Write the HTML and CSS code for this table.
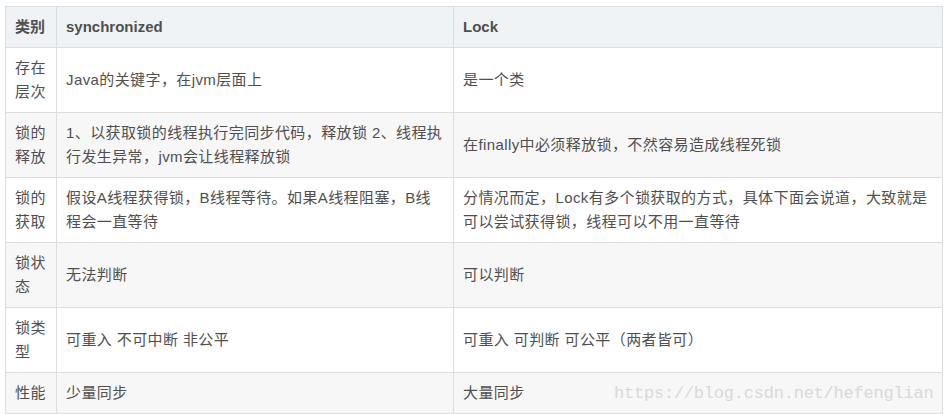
FILE: index.html
```html
<!DOCTYPE html>
<html lang="zh-CN">
<head>
<meta charset="utf-8">
<title>synchronized vs Lock</title>
<link rel="stylesheet" href="styles.css">
</head>
<body>
<div class="wrap">
  <table class="cmp">
    <colgroup>
      <col class="c1">
      <col class="c2">
      <col class="c3">
    </colgroup>
    <thead>
      <tr><th>类别</th><th>synchronized</th><th>Lock</th></tr>
    </thead>
    <tbody>
      <tr><td>存在层次</td><td>Java的关键字，在jvm层面上</td><td>是一个类</td></tr>
      <tr><td>锁的释放</td><td>1、以获取锁的线程执行完同步代码，释放锁 2、线程执行发生异常，jvm会让线程释放锁</td><td>在finally中必须释放锁，不然容易造成线程死锁</td></tr>
      <tr><td>锁的获取</td><td>假设A线程获得锁，B线程等待。如果A线程阻塞，B线程会一直等待</td><td>分情况而定，Lock有多个锁获取的方式，具体下面会说道，大致就是可以尝试获得锁，线程可以不用一直等待</td></tr>
      <tr><td>锁状态</td><td>无法判断</td><td>可以判断</td></tr>
      <tr><td>锁类型</td><td>可重入 不可中断 非公平</td><td>可重入 可判断 可公平（两者皆可）</td></tr>
      <tr><td>性能</td><td>少量同步</td><td>大量同步</td></tr>
    </tbody>
  </table>
  <div class="watermark">https://blog.csdn.net/hefenglian</div>
</div>
</body>
</html>
```
FILE: styles.css
```css
html, body {
  margin: 0;
  padding: 0;
  background: #ffffff;
}
body {
  font-family: "Liberation Sans", "Noto Sans CJK SC", sans-serif;
  font-size: 15px;
  color: #4f4f4f;
}
.wrap {
  position: relative;
  padding: 6px 0 0 5px;
  width: 937px;
}
.cmp {
  border-collapse: collapse;
  table-layout: fixed;
  width: 937px;
}
.c1 { width: 51px; }
.c2 { width: 397px; }
.c3 { width: 489px; }
.cmp th,
.cmp td {
  border: 1px solid #dddddd;
  padding: 8px 10px 8px 9px;
  line-height: 24px;
  text-align: left;
  vertical-align: middle;
  word-break: break-all;
}
.cmp td {
  letter-spacing: 0.4px;
}
.cmp th:first-child,
.cmp td:first-child {
  padding-right: 7px;
}
.cmp th {
  font-weight: bold;
  background: #eff3f5;
  color: #4f4f4f;
}
.cmp tbody tr:nth-child(odd) td {
  background: #ffffff;
}
.cmp tbody tr:nth-child(even) td {
  background: #f7f7f7;
}
.watermark {
  position: absolute;
  left: 614px;
  top: 382px;
  font-family: "Liberation Mono", monospace;
  font-size: 17px;
  letter-spacing: -0.22px;
  color: #d9d9d9;
  line-height: 24px;
  white-space: nowrap;
}
```
